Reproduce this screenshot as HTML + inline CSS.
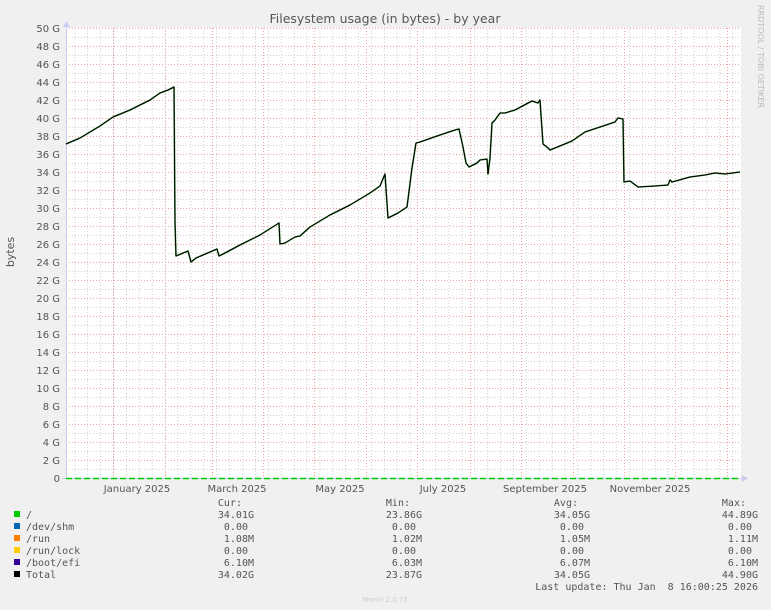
<!DOCTYPE html>
<html><head><meta charset="utf-8"><style>
html,body{margin:0;padding:0;background:#f0f0f0;}
svg{display:block;}
</style></head><body>
<svg width="771" height="610" xmlns="http://www.w3.org/2000/svg">
<defs>
<pattern id="vmin" x="74.3" y="0" width="12.9" height="610" patternUnits="userSpaceOnUse">
<line x1="0.5" y1="0" x2="0.5" y2="610" stroke="#cfcfcf" stroke-width="1" stroke-dasharray="1,2"/>
</pattern>
<pattern id="hmin" x="0" y="37" width="771" height="18" patternUnits="userSpaceOnUse">
<line x1="0" y1="0.5" x2="771" y2="0.5" stroke="#cfcfcf" stroke-width="1" stroke-dasharray="1,2"/>
</pattern>
<pattern id="hmaj" x="0" y="28" width="771" height="18" patternUnits="userSpaceOnUse">
<line x1="0" y1="0.5" x2="771" y2="0.5" stroke="#f0a0a0" stroke-width="1" stroke-dasharray="1,2"/>
</pattern>
</defs>
<rect x="66" y="28" width="675" height="451" fill="#fff"/>
<rect x="66" y="28" width="675" height="451" fill="url(#vmin)"/>
<rect x="66" y="28" width="675" height="451" fill="url(#hmin)"/>
<g stroke="#f0a0a0" stroke-width="1" stroke-dasharray="1,2">
<line x1="113.5" y1="28" x2="113.5" y2="479"/><line x1="165.5" y1="28" x2="165.5" y2="479"/>
<line x1="212.5" y1="28" x2="212.5" y2="479"/><line x1="263.5" y1="28" x2="263.5" y2="479"/>
<line x1="314.5" y1="28" x2="314.5" y2="479"/><line x1="366.5" y1="28" x2="366.5" y2="479"/>
<line x1="417.5" y1="28" x2="417.5" y2="479"/><line x1="470.5" y1="28" x2="470.5" y2="479"/>
<line x1="521.5" y1="28" x2="521.5" y2="479"/><line x1="573.5" y1="28" x2="573.5" y2="479"/>
<line x1="624.5" y1="28" x2="624.5" y2="479"/><line x1="675.5" y1="28" x2="675.5" y2="479"/>
<line x1="727.5" y1="28" x2="727.5" y2="479"/>
</g>
<rect x="66" y="28" width="675" height="451" fill="url(#hmaj)"/>
<line x1="66.5" y1="24" x2="66.5" y2="479" stroke="#c8ccf0"/>
<polygon points="63,27 66.5,21 70,27" fill="#c8ccf0"/>
<line x1="62" y1="478.5" x2="744" y2="478.5" stroke="#c8ccf0"/>
<polygon points="742,475 748,478.5 742,482" fill="#c8ccf0"/>
<line x1="66" y1="478.5" x2="741" y2="478.5" stroke="#00cc00" stroke-width="1.5" stroke-dasharray="6,3"/>
<polyline fill="none" stroke="#2a8a2a" stroke-width="1.6" stroke-linejoin="round" points="66,144 80,138 100,126 113,117 130,110 150,100 160,93 168,90 174,87 175,223 176,256 188,251 191,262 196,258 217,249 219,256 225,253 240,245 260,235 279,223 280,244 285,243 295,237 300,236 310,227 330,215 350,205 370,193 380,186 385,174 388,218 398,213 407,207 412,168 416,143 420,142 440,135 455,130 459,129 463,147 466,163 469,167 477,163 480,160 487,159 488,174 490,158 492,123 495,120 500,113 505,113 515,110 530,102 532,101 538,103 540,100 543,144 548,148 550,150 555,148 572,141 585,132 600,127 615,122 618,118 623,119 624,182 630,181 638,187 655,186 668,185 670,180 672,182 690,177 705,175 715,173 725,174 740,172"/>
<polyline fill="none" stroke="#000" stroke-width="1" stroke-linejoin="round" points="66,144 80,138 100,126 113,117 130,110 150,100 160,93 168,90 174,87 175,223 176,256 188,251 191,262 196,258 217,249 219,256 225,253 240,245 260,235 279,223 280,244 285,243 295,237 300,236 310,227 330,215 350,205 370,193 380,186 385,174 388,218 398,213 407,207 412,168 416,143 420,142 440,135 455,130 459,129 463,147 466,163 469,167 477,163 480,160 487,159 488,174 490,158 492,123 495,120 500,113 505,113 515,110 530,102 532,101 538,103 540,100 543,144 548,148 550,150 555,148 572,141 585,132 600,127 615,122 618,118 623,119 624,182 630,181 638,187 655,186 668,185 670,180 672,182 690,177 705,175 715,173 725,174 740,172"/>
<g font-family="DejaVu Sans, sans-serif" font-size="10" fill="#555" text-anchor="end">
<text x="60" y="32">50 G</text><text x="60" y="50">48 G</text><text x="60" y="68">46 G</text>
<text x="60" y="86">44 G</text><text x="60" y="104">42 G</text><text x="60" y="122">40 G</text>
<text x="60" y="140">38 G</text><text x="60" y="158">36 G</text><text x="60" y="176">34 G</text>
<text x="60" y="194">32 G</text><text x="60" y="212">30 G</text><text x="60" y="230">28 G</text>
<text x="60" y="248">26 G</text><text x="60" y="266">24 G</text><text x="60" y="284">22 G</text>
<text x="60" y="302">20 G</text><text x="60" y="320">18 G</text><text x="60" y="338">16 G</text>
<text x="60" y="356">14 G</text><text x="60" y="374">12 G</text><text x="60" y="392">10 G</text>
<text x="60" y="410">8 G</text><text x="60" y="428">6 G</text><text x="60" y="446">4 G</text>
<text x="60" y="464">2 G</text><text x="60" y="482">0</text>
</g>
<g font-family="DejaVu Sans, sans-serif" font-size="10" fill="#555" text-anchor="middle">
<text x="137" y="492">January 2025</text><text x="237" y="492">March 2025</text>
<text x="340" y="492">May 2025</text><text x="443" y="492">July 2025</text>
<text x="545" y="492">September 2025</text><text x="650" y="492">November 2025</text>
</g>
<text x="385" y="23" font-family="DejaVu Sans, sans-serif" font-size="12.5" fill="#555" text-anchor="middle">Filesystem usage (in bytes) - by year</text>
<text transform="translate(14,252) rotate(-90)" font-family="DejaVu Sans, sans-serif" font-size="11" fill="#555" text-anchor="middle">bytes</text>
<text transform="translate(758,5) rotate(90)" font-family="DejaVu Sans, sans-serif" font-size="8" fill="#bbb">RRDTOOL / TOBI OETIKER</text>
<rect x="14" y="511" width="6" height="6" fill="#00cc00"/>
<rect x="14" y="523" width="6" height="6" fill="#0066b3"/>
<rect x="14" y="535" width="6" height="6" fill="#ff8000"/>
<rect x="14" y="547" width="6" height="6" fill="#ffcc00"/>
<rect x="14" y="559" width="6" height="6" fill="#330099"/>
<rect x="14" y="571" width="6" height="6" fill="#000"/>
<g font-family="DejaVu Sans Mono, monospace" font-size="10" fill="#555">
<text x="26" y="518">/</text><text x="26" y="530">/dev/shm</text><text x="26" y="542">/run</text>
<text x="26" y="554">/run/lock</text><text x="26" y="566">/boot/efi</text><text x="26" y="578">Total</text>
</g>
<g font-family="DejaVu Sans Mono, monospace" font-size="10" fill="#555" text-anchor="end">
<text x="242" y="506">Cur:</text><text x="410" y="506">Min:</text><text x="578" y="506">Avg:</text><text x="746" y="506">Max:</text>
<text x="254" y="518">34.01G</text><text x="248" y="530">0.00</text><text x="254" y="542">1.08M</text><text x="248" y="554">0.00</text><text x="254" y="566">6.10M</text><text x="254" y="578">34.02G</text>
<text x="422" y="518">23.86G</text><text x="416" y="530">0.00</text><text x="422" y="542">1.02M</text><text x="416" y="554">0.00</text><text x="422" y="566">6.03M</text><text x="422" y="578">23.87G</text>
<text x="590" y="518">34.05G</text><text x="584" y="530">0.00</text><text x="590" y="542">1.05M</text><text x="584" y="554">0.00</text><text x="590" y="566">6.07M</text><text x="590" y="578">34.05G</text>
<text x="758" y="518">44.89G</text><text x="752" y="530">0.00</text><text x="758" y="542">1.11M</text><text x="752" y="554">0.00</text><text x="758" y="566">6.10M</text><text x="758" y="578">44.90G</text>
<text x="758" y="590" xml:space="preserve">Last update: Thu Jan  8 16:00:25 2026</text>
</g>
<text x="385" y="602" font-family="DejaVu Sans, sans-serif" font-size="7" fill="#ccc" text-anchor="middle">Munin 2.0.75</text>
</svg>
</body></html>
